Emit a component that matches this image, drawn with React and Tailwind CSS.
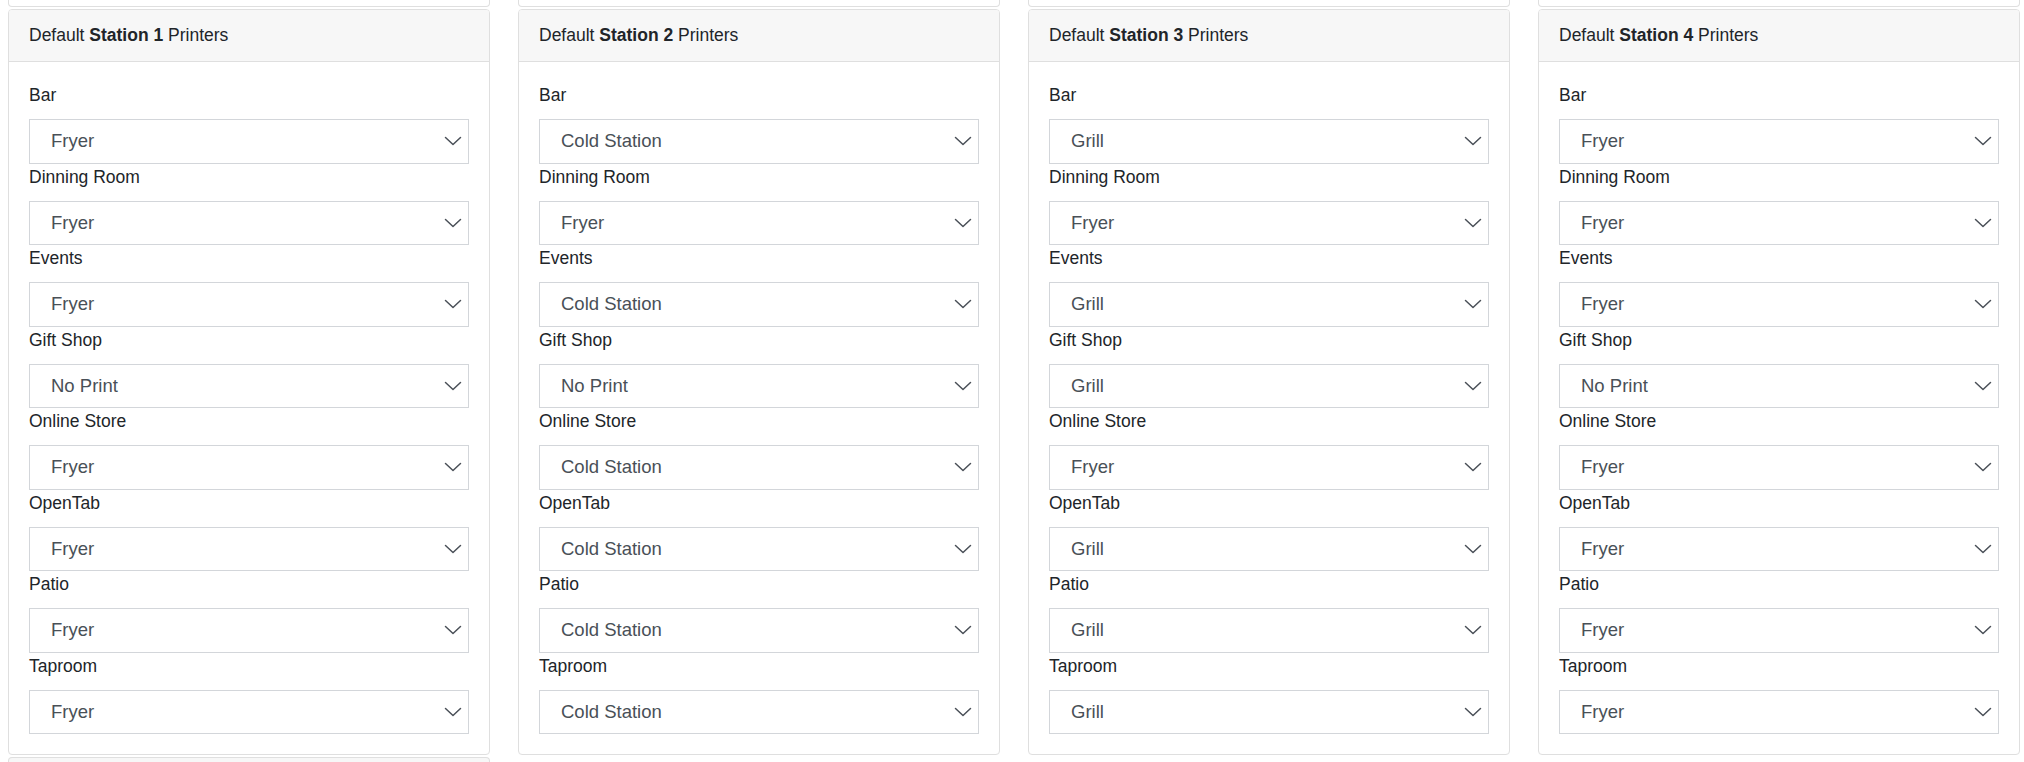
import React from "react";

const areas = ["Bar", "Dinning Room", "Events", "Gift Shop", "Online Store", "OpenTab", "Patio", "Taproom"];

const stations = [
  { id: 1, printers: ["Fryer", "Fryer", "Fryer", "No Print", "Fryer", "Fryer", "Fryer", "Fryer"], more: true },
  { id: 2, printers: ["Cold Station", "Fryer", "Cold Station", "No Print", "Cold Station", "Cold Station", "Cold Station", "Cold Station"] },
  { id: 3, printers: ["Grill", "Fryer", "Grill", "Grill", "Fryer", "Grill", "Grill", "Grill"] },
  { id: 4, printers: ["Fryer", "Fryer", "Fryer", "No Print", "Fryer", "Fryer", "Fryer", "Fryer"] },
];

function Chevron() {
  return (
    <svg width="18" height="10" viewBox="0 0 18 10" fill="none" className="shrink-0">
      <polyline points="1.5,1.5 9,8.5 16.5,1.5" stroke="#4a5058" strokeWidth="1.5" strokeLinecap="round" strokeLinejoin="round" />
    </svg>
  );
}

function PrinterSelect({ value }) {
  return (
    <div className="h-[44.5px] w-full border border-[#d3d6da] bg-white flex items-center justify-between pl-[21px] pr-[6px]">
      <span className="text-[18.5px] text-[#495057]">{value}</span>
      <Chevron />
    </div>
  );
}

function StationCard({ station }) {
  return (
    <div className="w-[482px] flex flex-col">
      {/* bottom edge of the card above */}
      <div className="h-[7px] border-x border-b border-[#dfdfdf] rounded-b-[4px] bg-white"></div>
      <div className="mt-[2px] border border-[#dfdfdf] rounded-[4px] bg-white overflow-hidden">
        <div className="h-[52px] pt-[12px] px-[20px] bg-[#f7f7f7] border-b border-[#dfdfdf] text-[17.5px] leading-[26px] text-[#212529]">
          Default <span className="font-bold">Station {station.id}</span> Printers
        </div>
        <div className="px-[20px] pt-[20px] pb-[20px]">
          {areas.map((area, i) => (
            <div key={area}>
              <div className="text-[17.5px] leading-[26px] mb-[11px] text-[#212529]">{area}</div>
              <PrinterSelect value={station.printers[i]} />
            </div>
          ))}
        </div>
      </div>
      {station.more && (
        <div className="mt-[2px] h-[20px] border-x border-t border-[#dfdfdf] rounded-t-[4px] bg-[#f7f7f7]"></div>
      )}
    </div>
  );
}

export default function App() {
  return (
    <div className="w-[2024px] h-[762px] overflow-hidden bg-white font-['Liberation_Sans',Arial,sans-serif]">
      <div className="flex flex-row gap-[28px] pl-[8px]">
        {stations.map((s) => (
          <StationCard key={s.id} station={s} />
        ))}
      </div>
    </div>
  );
}
